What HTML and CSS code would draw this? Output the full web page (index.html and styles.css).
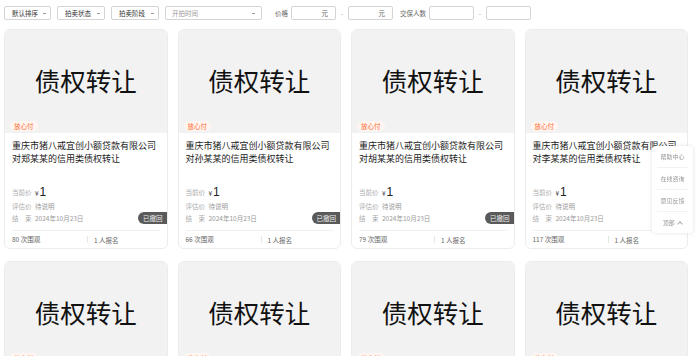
FILE: index.html
```html
<!DOCTYPE html>
<html lang="zh-CN">

<head>
    <meta charset="UTF-8">
    <meta name="viewport" content="width=device-width, initial-scale=1.0">
    <title>债权转让</title>
    <link rel="stylesheet" href="styles.css">
</head>

<body>
    <div class="filter-bar">
        <div class="select w47">默认排序 <i class="caret"></i></div>
        <div class="select w48">拍卖状态 <i class="caret"></i></div>
        <div class="select w48">拍卖阶段 <i class="caret"></i></div>
        <div class="select date">开拍时间 <i class="caret"></i></div>
        <span class="flabel first">价格</span>
        <div class="num-input">元</div>
        <span class="dash">-</span>
        <div class="num-input">元</div>
        <span class="flabel">交保人数</span>
        <div class="num-input"></div>
        <span class="dash">-</span>
        <div class="num-input"></div>
    </div>

    <div class="card-list">
        <div class="card">
            <div class="cover"><span class="cover-text">债权转让</span><span class="tag">放心付</span></div>
            <div class="info">
                <div class="title">重庆市猪八戒宜创小额贷款有限公司对郑某某的信用类债权转让</div>
                <div class="meta">
                    <div class="row price"><span class="lbl">当前价</span><span class="yen">¥</span><span class="big">1</span></div>
                    <div class="row"><span class="lbl">评估价</span><span>待说明</span></div>
                    <div class="row"><span class="lbl">结　束</span><span>2024年10月23日</span></div>
                    <span class="status">已撤回</span>
                </div>
            </div>
            <div class="foot"><span class="views">80 次围观</span><span class="signs">1 人报名</span></div>
        </div>
        <div class="card">
            <div class="cover"><span class="cover-text">债权转让</span><span class="tag">放心付</span></div>
            <div class="info">
                <div class="title">重庆市猪八戒宜创小额贷款有限公司对孙某某的信用类债权转让</div>
                <div class="meta">
                    <div class="row price"><span class="lbl">当前价</span><span class="yen">¥</span><span class="big">1</span></div>
                    <div class="row"><span class="lbl">评估价</span><span>待说明</span></div>
                    <div class="row"><span class="lbl">结　束</span><span>2024年10月23日</span></div>
                    <span class="status">已撤回</span>
                </div>
            </div>
            <div class="foot"><span class="views">66 次围观</span><span class="signs">1 人报名</span></div>
        </div>
        <div class="card">
            <div class="cover"><span class="cover-text">债权转让</span><span class="tag">放心付</span></div>
            <div class="info">
                <div class="title">重庆市猪八戒宜创小额贷款有限公司对胡某某的信用类债权转让</div>
                <div class="meta">
                    <div class="row price"><span class="lbl">当前价</span><span class="yen">¥</span><span class="big">1</span></div>
                    <div class="row"><span class="lbl">评估价</span><span>待说明</span></div>
                    <div class="row"><span class="lbl">结　束</span><span>2024年10月23日</span></div>
                    <span class="status">已撤回</span>
                </div>
            </div>
            <div class="foot"><span class="views">79 次围观</span><span class="signs">1 人报名</span></div>
        </div>
        <div class="card">
            <div class="cover"><span class="cover-text">债权转让</span><span class="tag">放心付</span></div>
            <div class="info">
                <div class="title">重庆市猪八戒宜创小额贷款有限公司对李某某的信用类债权转让</div>
                <div class="meta">
                    <div class="row price"><span class="lbl">当前价</span><span class="yen">¥</span><span class="big">1</span></div>
                    <div class="row"><span class="lbl">评估价</span><span>待说明</span></div>
                    <div class="row"><span class="lbl">结　束</span><span>2024年10月23日</span></div>
                </div>
            </div>
            <div class="foot"><span class="views">117 次围观</span><span class="signs">1 人报名</span></div>
        </div>

        <div class="card">
            <div class="cover"><span class="cover-text">债权转让</span><span class="tag">放心付</span></div>
        </div>
        <div class="card">
            <div class="cover"><span class="cover-text">债权转让</span><span class="tag">放心付</span></div>
        </div>
        <div class="card">
            <div class="cover"><span class="cover-text">债权转让</span><span class="tag">放心付</span></div>
        </div>
        <div class="card">
            <div class="cover"><span class="cover-text">债权转让</span><span class="tag">放心付</span></div>
        </div>
    </div>

    <div class="side-bar">
        <div class="side-item">帮助中心</div>
        <div class="side-item">在线咨询</div>
        <div class="side-item">意见反馈</div>
        <div class="side-item">顶部 <i class="up"></i></div>
    </div>
</body>

</html>
```

FILE: styles.css
```css
body {
    margin: 0;
    font-family: "Noto Sans CJK SC", "Noto Sans", sans-serif;
    color: #333;
    background: #fff;
}

.filter-bar {
    display: flex;
    align-items: center;
    height: 14px;
    margin-top: 6px;
    padding-left: 4px;
    font-size: 6.5px;
}

.select {
    box-sizing: border-box;
    height: 14px;
    border: 1px solid #d4d4d4;
    border-radius: 2px;
    display: flex;
    align-items: center;
    justify-content: space-between;
    padding: 0 4px 0 7px;
    margin-right: 6px;
    color: #333;
}

.w47 {
    width: 47px;
}

.w48 {
    width: 48px;
}

.date {
    width: 97px;
    color: #999;
    padding-left: 6px;
    padding-right: 6px;
}

.caret {
    width: 3px;
    height: 1px;
    background: #999;
}

.flabel {
    color: #666;
    margin-left: 7px;
    margin-right: 3px;
}

.flabel.first {
    margin-left: 7px;
}

.num-input {
    box-sizing: border-box;
    width: 45px;
    height: 14px;
    border: 1px solid #d4d4d4;
    border-radius: 2px;
    text-align: right;
    padding-right: 7px;
    line-height: 12px;
    color: #666;
}

.dash {
    width: 12px;
    text-align: center;
    color: #999;
}

.card-list {
    display: grid;
    grid-template-columns: repeat(4, 1fr);
    column-gap: 10px;
    row-gap: 12px;
    width: 684px;
    margin: 9px 0 0 4px;
}

.card {
    box-sizing: border-box;
    border: 1px solid #ececec;
    border-radius: 6px;
    overflow: hidden;
    background: #fff;
}

.cover {
    position: relative;
    height: 103px;
    background: #f2f2f2;
    display: flex;
    justify-content: center;
    align-items: center;
}

.cover-text {
    font-size: 25.5px;
    color: #111;
    margin-top: -4px;
}

.tag {
    position: absolute;
    left: 5px;
    bottom: 2px;
    padding: 0 4px;
    height: 10px;
    line-height: 10px;
    font-size: 6.5px;
    color: #ff6b2c;
    background: #fff6f2;
    border-radius: 5px;
}

.info {
    padding: 6px 0 0 7px;
}

.title {
    font-size: 9px;
    line-height: 13px;
    color: #222;
    height: 26px;
    padding-right: 6px;
    margin-bottom: 19px;
}

.meta {
    position: relative;
    font-size: 6.5px;
    color: #999;
    margin-bottom: 6px;
}

.row {
    display: flex;
    align-items: center;
    height: 12px;
}

.row.price {
    height: 16px;
}

.lbl {
    width: 23px;
    color: #aaa;
}

.yen {
    font-size: 6.5px;
    color: #333;
    margin-right: 1px;
    margin-top: 2px;
}

.big {
    font-family: "Liberation Sans", sans-serif;
    font-size: 12px;
    color: #222;
}

.status {
    position: absolute;
    right: 0;
    bottom: 0;
    height: 12px;
    line-height: 12px;
    padding: 0 4px 0 5px;
    font-size: 6.5px;
    color: #eee;
    background: #5a5a5a;
    border-radius: 6px 0 0 6px;
}

.foot {
    display: flex;
    align-items: center;
    height: 17px;
    margin: 0 7px;
    border-top: 1px solid #f0f0f0;
    font-size: 6.5px;
    color: #666;
}

.views {
    width: 75px;
    border-right: 1px solid #e6e6e6;
    line-height: 7px;
}

.signs {
    padding-left: 6px;
}

.side-bar {
    position: fixed;
    top: 146px;
    right: 7px;
    width: 41px;
    background: #fff;
    border-radius: 4px;
    box-shadow: 0 0 4px rgba(0, 0, 0, 0.12);
    padding: 0 5px;
    box-sizing: border-box;
}

.side-item {
    height: 21px;
    line-height: 21px;
    text-align: center;
    font-size: 6px;
    color: #999;
    border-bottom: 1px solid #f2f2f2;
}

.side-item:last-child {
    border-bottom: 0;
}

.up {
    display: inline-block;
    width: 3px;
    height: 3px;
    border-left: 1px solid #aaa;
    border-top: 1px solid #aaa;
    transform: rotate(45deg);
    margin-left: 2px;
    vertical-align: -1px;
}
```
